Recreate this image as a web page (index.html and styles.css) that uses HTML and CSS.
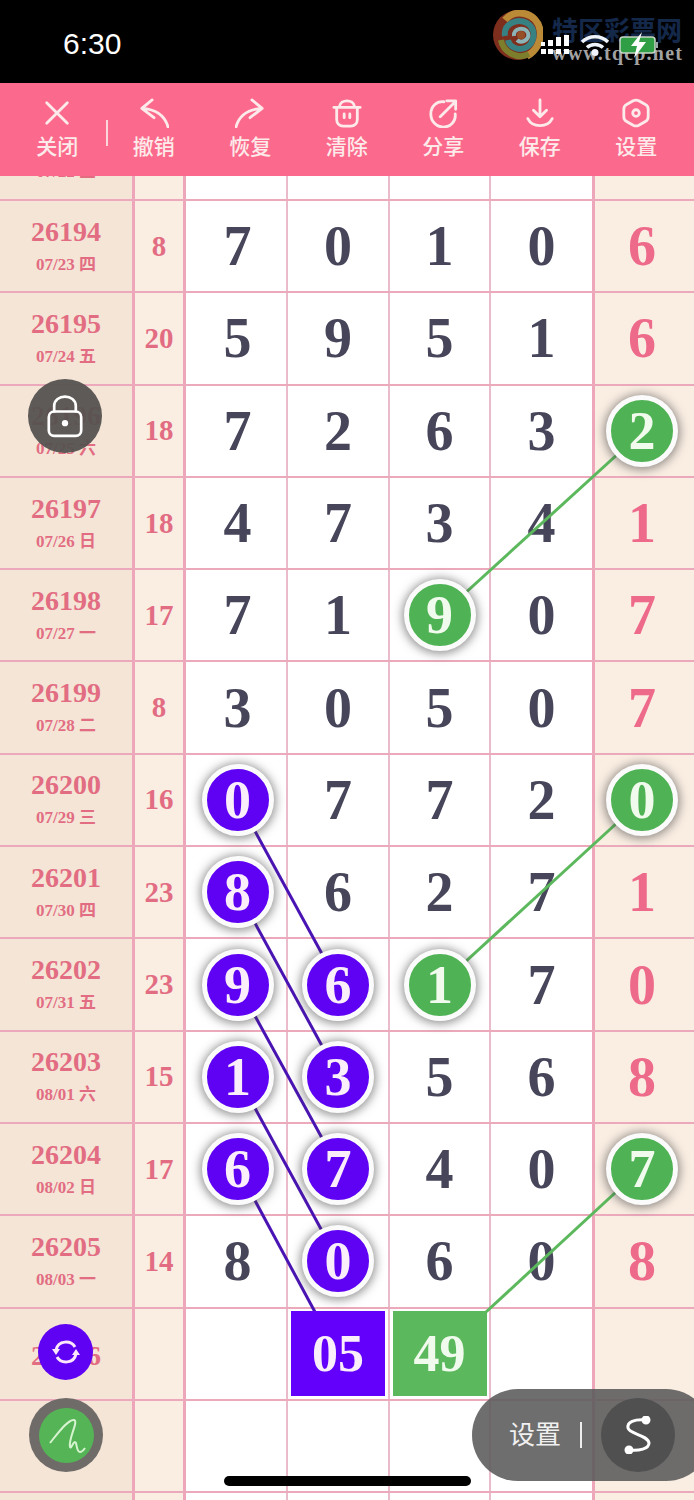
FILE: index.html
```html
<!DOCTYPE html>
<html lang="en">
<head>
    <meta charset="UTF-8">
    <meta name="viewport" content="width=device-width, initial-scale=1.0">
    <title>Chart</title>
    <link rel="stylesheet" href="styles.css">
</head>
<body>
<div id="page">
    <div id="status">
        <div class="time">6:30</div>
        <!-- site watermark -->
        <div class="mark">
            <svg class="mark-logo" width="50" height="50" viewBox="0 0 50 50" fill="none">
                <ellipse cx="25" cy="25" rx="25" ry="25" fill="#8c3320"/>
                <path d="M12 10C22 -2 44 2 47 20C49 32 42 42 34 46" stroke="#cf9a3e" stroke-width="7"/>
                <path d="M8 30C10 42 24 50 36 44" stroke="#8a8c30" stroke-width="6"/>
                <path d="M12 26C10 14 24 8 34 13C44 19 42 34 32 38C24 41 16 36 15 30" stroke="#3f8f92" stroke-width="6"/>
                <path d="M21 26C20 18 32 16 35 23C37 30 28 34 24 30" stroke="#9cc7c9" stroke-width="4"/>
                <circle cx="28" cy="25" r="4" fill="#a8582c"/>
            </svg>
            <div class="mark-cn">特区彩票网</div>
            <div class="mark-url">www.tqcp.net</div>
        </div>
        <div class="status-icons">
            <svg width="31" height="20" viewBox="0 0 31 20"><g fill="#fff"><rect x="1" y="7" width="4" height="4"/><rect x="8" y="5" width="5" height="6"/><rect x="16" y="2" width="5" height="9"/><rect x="24" y="0" width="5" height="11"/><rect x="1" y="14" width="5" height="5"/><rect x="8" y="14" width="5" height="5"/><rect x="16" y="14" width="5" height="5"/><rect x="24" y="14" width="5" height="5"/></g></svg>
            <svg width="30" height="22" viewBox="0 0 30 22" fill="none" stroke="#eef4fa" stroke-width="3.4"><path d="M2 8C9 1 21 1 28 8"/><path d="M7 13.500C11 9.500 19 9.500 23 13.500"/><circle cx="15" cy="18.500" r="1.800" fill="#fff"/></svg>
            <svg width="40" height="26" viewBox="0 0 40 26"><rect x="1" y="5" width="35" height="16" rx="3" fill="#2f9e44" stroke="#c9d6c9" stroke-width="1.500"/><rect x="37" y="10" width="2" height="6" fill="#9aa"/><path d="M23 0L12 14H18L15 26L27 10H20Z" fill="#fff"/></svg>
        </div>
    </div>

    <div id="toolbar">
        <div class="tool">
            <svg viewBox="0 0 32 32"><path d="M5 5L27 27M27 5L5 27"/></svg>
            <span>关闭</span>
        </div>
        <div class="tool-sep"></div>
        <div class="tool">
            <svg viewBox="0 0 32 32"><path d="M31 31C28 20 19 12 3 11M14 2L3 11L16 21"/></svg>
            <span>撤销</span>
        </div>
        <div class="tool">
            <svg viewBox="0 0 32 32"><path d="M1 31C4 20 13 12 29 11M18 2L29 11L16 21"/></svg>
            <span>恢复</span>
        </div>
        <div class="tool">
            <svg viewBox="0 0 32 32"><path d="M2 10H30M8 9C9 1 23 1 24 9M5 10V23C5 27 8 30 12 30H20C24 30 27 27 27 23V10M13 17V21M19 17V21"/></svg>
            <span>清除</span>
        </div>
        <div class="tool">
            <svg viewBox="0 0 32 32"><path d="M17 4C9 3 3 9 3 17C3 25 9 31 16.500 31C24 31 30 25 29 17M13 20L28 5M20 3H29.500V12"/></svg>
            <span>分享</span>
        </div>
        <div class="tool">
            <svg viewBox="0 0 32 32"><path d="M16 2V20M9 13L16 20L23 13M3 22C8 32 24 32 29 22"/></svg>
            <span>保存</span>
        </div>
        <div class="tool">
            <svg viewBox="0 0 32 32"><path d="M13 3C15 2 17 2 19 3L26 7C28 8 29 10 29 12V20C29 22 28 24 26 25L19 29C17 30 15 30 13 29L6 25C4 24 3 22 3 20V12C3 10 4 8 6 7Z"/><circle cx="16" cy="16" r="3.500"/></svg>
            <span>设置</span>
        </div>
    </div>

    <div id="chart">
        <div class="row first">
            <div class="cell id"><b>26193</b><small>07/22 三</small></div><div class="cell sum"></div>
            <div class="cell"></div><div class="cell"></div><div class="cell"></div><div class="cell"></div><div class="cell last"></div>
        </div>
        <div class="row">
            <div class="cell id"><b>26194</b><small>07/23 四</small></div><div class="cell sum">8</div>
            <div class="cell">7</div><div class="cell">0</div><div class="cell">1</div><div class="cell">0</div><div class="cell last">6</div>
        </div>
        <div class="row">
            <div class="cell id"><b>26195</b><small>07/24 五</small></div><div class="cell sum">20</div>
            <div class="cell">5</div><div class="cell">9</div><div class="cell">5</div><div class="cell">1</div><div class="cell last">6</div>
        </div>
        <div class="row">
            <div class="cell id"><b>26196</b><small>07/25 六</small></div><div class="cell sum">18</div>
            <div class="cell">7</div><div class="cell">2</div><div class="cell">6</div><div class="cell">3</div><div class="cell last"><i class="ball green">2</i></div>
        </div>
        <div class="row">
            <div class="cell id"><b>26197</b><small>07/26 日</small></div><div class="cell sum">18</div>
            <div class="cell">4</div><div class="cell">7</div><div class="cell">3</div><div class="cell">4</div><div class="cell last">1</div>
        </div>
        <div class="row">
            <div class="cell id"><b>26198</b><small>07/27 一</small></div><div class="cell sum">17</div>
            <div class="cell">7</div><div class="cell">1</div><div class="cell"><i class="ball green">9</i></div><div class="cell">0</div><div class="cell last">7</div>
        </div>
        <div class="row">
            <div class="cell id"><b>26199</b><small>07/28 二</small></div><div class="cell sum">8</div>
            <div class="cell">3</div><div class="cell">0</div><div class="cell">5</div><div class="cell">0</div><div class="cell last">7</div>
        </div>
        <div class="row">
            <div class="cell id"><b>26200</b><small>07/29 三</small></div><div class="cell sum">16</div>
            <div class="cell"><i class="ball purple">0</i></div><div class="cell">7</div><div class="cell">7</div><div class="cell">2</div><div class="cell last"><i class="ball green">0</i></div>
        </div>
        <div class="row">
            <div class="cell id"><b>26201</b><small>07/30 四</small></div><div class="cell sum">23</div>
            <div class="cell"><i class="ball purple">8</i></div><div class="cell">6</div><div class="cell">2</div><div class="cell">7</div><div class="cell last">1</div>
        </div>
        <div class="row">
            <div class="cell id"><b>26202</b><small>07/31 五</small></div><div class="cell sum">23</div>
            <div class="cell"><i class="ball purple">9</i></div><div class="cell"><i class="ball purple">6</i></div><div class="cell"><i class="ball green">1</i></div><div class="cell">7</div><div class="cell last">0</div>
        </div>
        <div class="row">
            <div class="cell id"><b>26203</b><small>08/01 六</small></div><div class="cell sum">15</div>
            <div class="cell"><i class="ball purple">1</i></div><div class="cell"><i class="ball purple">3</i></div><div class="cell">5</div><div class="cell">6</div><div class="cell last">8</div>
        </div>
        <div class="row">
            <div class="cell id"><b>26204</b><small>08/02 日</small></div><div class="cell sum">17</div>
            <div class="cell"><i class="ball purple">6</i></div><div class="cell"><i class="ball purple">7</i></div><div class="cell">4</div><div class="cell">0</div><div class="cell last"><i class="ball green">7</i></div>
        </div>
        <div class="row">
            <div class="cell id"><b>26205</b><small>08/03 一</small></div><div class="cell sum">14</div>
            <div class="cell">8</div><div class="cell"><i class="ball purple">0</i></div><div class="cell">6</div><div class="cell">0</div><div class="cell last">8</div>
        </div>
        <div class="row">
            <div class="cell id"><b>26206</b></div><div class="cell sum"></div>
            <div class="cell"></div><div class="cell"><span class="box purple">05</span></div><div class="cell"><span class="box green">49</span></div><div class="cell"></div><div class="cell last"></div>
        </div>
        <div class="row">
            <div class="cell id"></div><div class="cell sum"></div>
            <div class="cell"></div><div class="cell"></div><div class="cell"></div><div class="cell"></div><div class="cell last"></div>
        </div>
        <div class="row">
            <div class="cell id"></div><div class="cell sum"></div>
            <div class="cell"></div><div class="cell"></div><div class="cell"></div><div class="cell"></div><div class="cell last"></div>
        </div>
    </div>

    <!-- lines joining the balls, page coordinates -->
    <svg id="lines" width="694" height="1500" viewBox="0 0 694 1500">
        <g stroke="#5cb85c" stroke-width="3">
            <line x1="642" y1="432" x2="440" y2="616"/>
            <line x1="642" y1="800" x2="440" y2="985"/>
            <line x1="642" y1="1168" x2="486" y2="1312"/>
        </g>
        <g stroke="#4a14b4" stroke-width="3">
            <line x1="238" y1="800" x2="339" y2="985"/>
            <line x1="238" y1="892" x2="339" y2="1077"/>
            <line x1="238" y1="985" x2="339" y2="1169"/>
            <line x1="238" y1="1077" x2="339" y2="1262"/>
            <line x1="238" y1="1169" x2="315" y2="1312"/>
        </g>
    </svg>

    <div class="float lock">
        <svg width="36" height="44" viewBox="0 0 40 48" fill="none" stroke="#fff" stroke-width="3"><path d="M8 20V13C8 -1 32 -1 32 13V20"/><rect x="2" y="19" width="36" height="27" rx="6"/><circle cx="20" cy="32" r="3.500" fill="#fff" stroke="none"/></svg>
    </div>
    <div class="float refresh">
        <svg width="30" height="30" viewBox="0 0 30 30" fill="none" stroke="#fbe6fb" stroke-width="3"><path d="M5 13C7 3 20 3 24 10M25 17C23 27 10 27 6 20"/><path d="M1 12H9L5 18ZM29 18H21L25 12Z" fill="#fbe6fb" stroke="none"/></svg>
    </div>
    <div class="float pen">
        <div class="pen-in">
            <svg width="40" height="40" viewBox="0 0 40 40" fill="none" stroke="#d6f3d0" stroke-width="2"><path d="M4 28C12 18 22 4 28 5C33 6 22 24 24 32C25 35 28 24 30 28C31 32 31 37 34 37C36 37 37 36 39 33"/></svg>
        </div>
    </div>
    <div class="float pill">
        <span>设置</span>
        <div class="pill-sep"></div>
        <div class="pill-btn">
            <svg width="28" height="38" viewBox="0 0 28 38" fill="none" stroke="#fff" stroke-width="3"><path d="M22 4C10 3 3 6 4 12C5 18 24 19 25 27C25 33 15 35 5 34"/><circle cx="22" cy="4" r="3" fill="#fff"/><circle cx="5" cy="34" r="3" fill="#fff"/></svg>
        </div>
    </div>
    <div class="home-bar"></div>
</div>
</body>
</html>
```

FILE: styles.css
```css
body {
    margin: 0;
    background-color: #fff;
}
#page {
    position: relative;
    width: 694px;
    height: 1500px;
    overflow: hidden;
    display: flex;
    flex-direction: column;
    font-family: "Liberation Serif", "Noto Sans CJK SC", serif;
}

/* status bar */
#status {
    position: relative;
    flex: none;
    height: 83px;
    background-color: #000;
    color: #fff;
    box-sizing: border-box;
    padding: 0 35px 0 63px;
    display: flex;
    align-items: center;
    justify-content: space-between;
}
.time {
    font-family: "Liberation Sans", sans-serif;
    font-size: 30px;
    margin-top: 4px;
}
.status-icons {
    position: relative;
    display: flex;
    align-items: center;
    gap: 9px;
    margin-top: 6px;
}
.mark {
    position: absolute;
    left: 493px;
    top: 10px;
    width: 200px;
    height: 52px;
}
.mark-logo {
    opacity: 0.9;
}
.mark-cn {
    position: absolute;
    left: 59px;
    top: 3px;
    font-family: "Noto Sans CJK SC", sans-serif;
    font-size: 26px;
    line-height: 32px;
    font-weight: 700;
    color: #14284a;
    white-space: nowrap;
}
.mark-url {
    position: absolute;
    left: 59px;
    top: 33px;
    font-size: 20px;
    line-height: 20px;
    font-weight: bold;
    letter-spacing: 1.2px;
    color: #a2a2a2;
    white-space: nowrap;
}

/* top toolbar */
#toolbar {
    position: relative;
    z-index: 5;
    flex: none;
    height: 93px;
    background-color: #fb6a8c;
    box-sizing: border-box;
    padding: 15px 9px 0 9px;
    display: flex;
    align-items: flex-start;
}
.tool {
    width: 96.5px;
    flex: none;
    display: flex;
    flex-direction: column;
    align-items: center;
    gap: 3px;
    color: #fdeaea;
    font-family: "Noto Sans CJK SC", sans-serif;
    font-size: 21px;
    font-weight: 500;
    line-height: 28px;
}
.tool svg {
    width: 30px;
    height: 30px;
    fill: none;
    stroke: #fdeaea;
    stroke-width: 3;
    stroke-linecap: round;
    stroke-linejoin: round;
}
.tool-sep {
    width: 2px;
    height: 26px;
    margin: 22px -2px 0 0;
    background-color: #fbd5dc;
    flex: none;
}

/* chart grid */
#chart {
    flex: 1;
    overflow: hidden;
}
.row {
    display: grid;
    grid-template-columns: 135px 51px 102px 102px 101px 104px 99px;
    height: 92.3px;
    box-sizing: border-box;
    border-bottom: 2px solid #eba9bb;
}
.row.first {
    margin-top: -67.3px;
}
.cell {
    display: flex;
    align-items: center;
    justify-content: center;
    box-sizing: border-box;
    border-right: 2px solid #eabccb;
    background-color: #fff;
    color: #46455a;
    font-size: 56px;
    font-weight: bold;
}
.cell:nth-child(3) {
    padding-left: 3px;
}
.id {
    flex-direction: column;
    padding-top: 3px;
    background-color: #f5e5d6;
    color: #e26d83;
    border-right: 3px solid #eea6ba;
}
.id b {
    font-size: 28px;
    line-height: 33px;
}
.id small {
    font-size: 17px;
    line-height: 33px;
}
.sum {
    background-color: #faeee3;
    color: #e26d83;
    font-size: 29px;
    border-right: 3px solid #eea6ba;
}
.cell:nth-child(6) {
    border-right: 3px solid #eea6ba;
}
.last {
    background-color: #faeee3;
    color: #ee6a8a;
    border-right: 0;
    padding-right: 5px;
}
.ball {
    position: relative;
    z-index: 2;
    width: 72px;
    height: 72px;
    flex: none;
    box-sizing: border-box;
    border: 5px solid #fbfbfb;
    border-radius: 50%;
    display: flex;
    align-items: center;
    justify-content: center;
    color: #fbeefb;
    font-style: normal;
    font-size: 54px;
    box-shadow: 0 1px 10px 2px rgba(60, 60, 60, 0.55);
}
.ball.purple {
    background-color: #5f02f4;
}
.ball.green {
    background-color: #4fb254;
    color: #f0fbee;
}
.box {
    position: relative;
    z-index: 2;
    width: 94px;
    height: 85px;
    flex: none;
    display: flex;
    align-items: center;
    justify-content: center;
    font-size: 52px;
    color: #fbeefb;
}
.box.purple {
    background-color: #6200fb;
}
.box.green {
    background-color: #5cb85c;
    color: #f0fbee;
}
#lines {
    position: absolute;
    left: 0;
    top: 0;
    z-index: 1;
}

/* floating buttons */
.float {
    position: absolute;
    z-index: 6;
    display: flex;
    align-items: center;
    justify-content: center;
}
.lock {
    left: 28px;
    top: 379px;
    width: 74px;
    height: 74px;
    border-radius: 50%;
    background-color: rgba(85, 82, 80, 0.95);
}
.refresh {
    left: 38px;
    top: 1324px;
    width: 55px;
    height: 56px;
    border-radius: 50%;
    background-color: #5f02f4;
}
.pen {
    left: 29px;
    top: 1398px;
    width: 74px;
    height: 74px;
    border-radius: 50%;
    background-color: #6f6b68;
}
.pen-in {
    width: 55px;
    height: 55px;
    border-radius: 50%;
    background-color: #55b556;
    display: flex;
    align-items: center;
    justify-content: center;
}
.pill {
    left: 472px;
    top: 1389px;
    width: 240px;
    height: 92px;
    box-sizing: border-box;
    padding-left: 37px;
    border-radius: 46px;
    background-color: rgba(90, 90, 90, 0.88);
    justify-content: flex-start;
    color: #f0f0f0;
    font-family: "Noto Sans CJK SC", sans-serif;
    font-size: 26px;
    line-height: 30px;
}
.pill span {
    margin-top: -5px;
}
.pill-sep {
    width: 2px;
    height: 26px;
    margin: 0 19px 0 19px;
    background-color: #eee;
}
.pill-btn {
    width: 74px;
    height: 74px;
    border-radius: 50%;
    background-color: #505050;
    display: flex;
    align-items: center;
    justify-content: center;
}
.home-bar {
    position: absolute;
    z-index: 7;
    left: 224px;
    top: 1476px;
    width: 247px;
    height: 10px;
    border-radius: 5px;
    background-color: #000;
}
```
